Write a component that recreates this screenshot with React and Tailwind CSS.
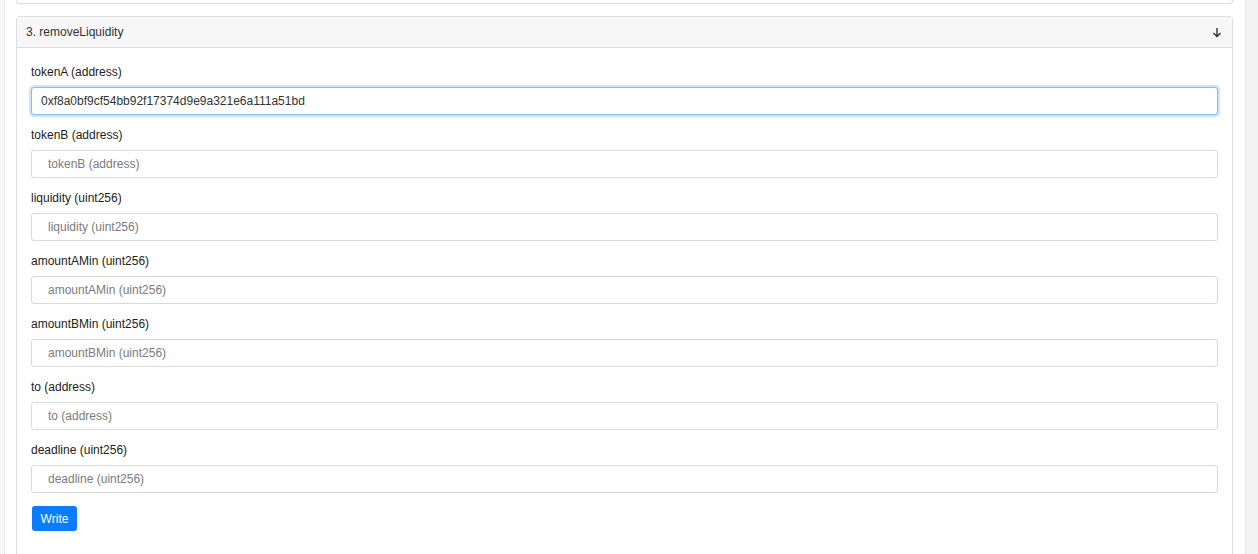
import React from "react";

const fields = [
  { label: "tokenA (address)", value: "0xf8a0bf9cf54bb92f17374d9e9a321e6a111a51bd", focused: true },
  { label: "tokenB (address)" },
  { label: "liquidity (uint256)" },
  { label: "amountAMin (uint256)" },
  { label: "amountBMin (uint256)" },
  { label: "to (address)" },
  { label: "deadline (uint256)" },
];

export default function App() {
  return (
    <div
      className="flex h-[554px] w-[1258px] overflow-hidden bg-white text-[12px] text-[#212529]"
      style={{ fontFamily: '"Liberation Sans", Arial, sans-serif' }}
    >
      <div className="w-[5px] shrink-0 border-r border-[#ececec] bg-[#f8f8f8]" />
      <div className="flex w-[1240px] shrink-0 flex-col pl-[11px] pr-[12px]">
        <div className="h-[4px] shrink-0 rounded-b-[3px] border-x border-b border-[#dfdfdf]" />
        <div className="mt-[12px] shrink-0 rounded-t-[3px] border border-[#dfdfdf]">
          <div className="flex h-[31px] items-center justify-between border-b border-[#dfdfdf] bg-[#f7f7f8] pl-[9px] pr-[10px]">
            <span className="text-[12px] text-[#333]">3. removeLiquidity</span>
            <svg width="10" height="11" viewBox="0 0 10 11" className="mt-[1px]">
              <path d="M5 1 V9.5 M1.5 6 L5 9.5 L8.5 6" fill="none" stroke="#333" strokeWidth="1.4" />
            </svg>
          </div>
          <div className="px-[14px] pb-[40px] pt-[17px]">
            {fields.map((f) => (
              <div key={f.label} className="mb-[13px]">
                <div className="mb-[8px] h-[14px] leading-[14px] text-[#222]">{f.label}</div>
                {f.focused ? (
                  <input
                    readOnly
                    value={f.value}
                    className="block h-[28px] w-full rounded-[3px] border border-[#86bdf5] bg-white pl-[9px] text-[12px] text-[#333] shadow-[0_0_0_2px_rgba(0,123,255,0.2)] outline-none"
                  />
                ) : (
                  <input
                    readOnly
                    placeholder={f.label}
                    className="block h-[28px] w-full rounded-[3px] border border-[#d9d9d9] bg-white pl-[16px] text-[12px] outline-none placeholder:text-[#7b7b7b]"
                  />
                )}
              </div>
            ))}
            <button className="ml-[1px] h-[25px] w-[45px] rounded-[3px] bg-[#0a7cff] text-[12px] text-white">
              Write
            </button>
          </div>
        </div>
      </div>
      <div className="flex-1 border-l border-[#e6e6e6] bg-[#f4f4f4]" />
    </div>
  );
}
